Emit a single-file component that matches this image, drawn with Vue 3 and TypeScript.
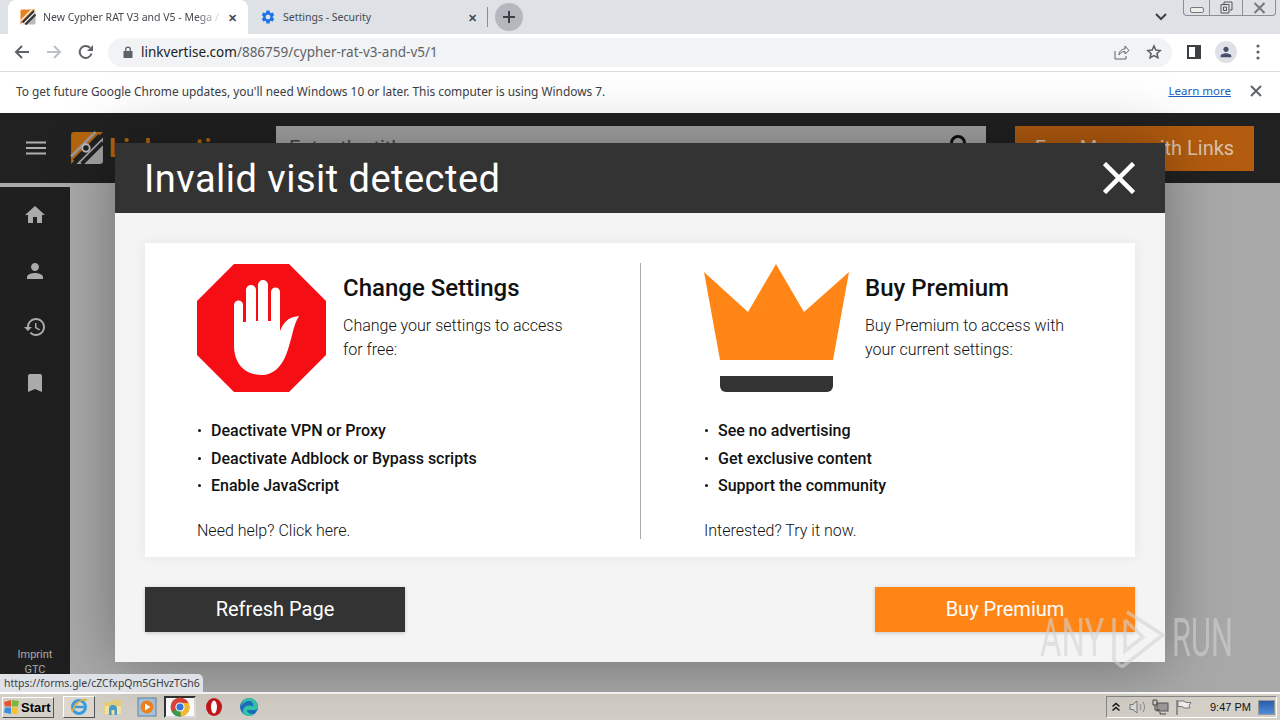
<script setup lang="ts">
const leftItems = ['Deactivate VPN or Proxy', 'Deactivate Adblock or Bypass scripts', 'Enable JavaScript']
const rightItems = ['See no advertising', 'Get exclusive content', 'Support the community']

const navIcons = [
  'M10 20v-6h4v6h5v-8h3L12 3 2 12h3v8z',
  'M12 12c2.21 0 4-1.79 4-4s-1.79-4-4-4-4 1.79-4 4 1.79 4 4 4zm0 2c-2.67 0-8 1.34-8 4v2h16v-2c0-2.66-5.33-4-8-4z',
  'M13 3c-4.97 0-9 4.03-9 9H1l3.89 3.89.07.14L9 12H6c0-3.87 3.13-7 7-7s7 3.13 7 7-3.13 7-7 7c-1.93 0-3.68-.79-4.94-2.06l-1.42 1.42C8.27 19.99 10.51 21 13 21c4.97 0 9-4.03 9-9s-4.03-9-9-9zm-1 5v5l4.28 2.54.72-1.21-3.5-2.08V8H12z',
  'M17 3H7c-1.1 0-2 .9-2 2v16l7-3 7 3V5c0-1.1-.9-2-2-2z',
]

const gear =
  'M19.14 12.94c.04-.3.06-.61.06-.94 0-.32-.02-.64-.07-.94l2.03-1.58a.49.49 0 0 0 .12-.61l-1.92-3.32a.488.488 0 0 0-.59-.22l-2.39.96c-.5-.38-1.03-.7-1.62-.94l-.36-2.54a.484.484 0 0 0-.48-.41h-3.84c-.24 0-.43.17-.47.41l-.36 2.54c-.59.24-1.13.57-1.62.94l-2.39-.96c-.22-.08-.47 0-.59.22L2.74 8.87c-.12.21-.08.47.12.61l2.03 1.58c-.05.3-.09.63-.09.94s.02.64.07.94l-2.03 1.58a.49.49 0 0 0-.12.61l1.92 3.32c.12.22.37.29.59.22l2.39-.96c.5.38 1.03.7 1.62.94l.36 2.54c.05.24.24.41.48.41h3.84c.24 0 .44-.17.47-.41l.36-2.54c.59-.24 1.13-.56 1.62-.94l2.39.96c.22.08.47 0 .59-.22l1.92-3.32c.12-.22.07-.47-.12-.61l-2.01-1.58zM12 15.6c-1.98 0-3.6-1.62-3.6-3.6s1.62-3.6 3.6-3.6 3.6 1.62 3.6 3.6-1.62 3.6-3.6 3.6z'
</script>

<template>
  <div class="screen">
    <div class="tabstrip">
      <div class="tab active">
        <svg class="favicon" viewBox="0 0 32 32">
          <path d="M4 1H31L1 31V4a3 3 0 0 1 3-3z" fill="#e8821e" />
          <path d="M31 6V28a3 3 0 0 1-3 3H6z" fill="#b9b9b9" />
          <path d="M1 24L24 1" stroke="#eee" stroke-width="3" />
          <path d="M5 27L28 4M11 31L31 11" stroke="#333" stroke-width="4" />
        </svg>
        <span class="tab-title fade">New Cypher RAT V3 and V5 - Mega / Linkvertise</span>
        <span class="tab-close">✕</span>
      </div>
      <div class="tab">
        <svg class="favicon" viewBox="0 0 24 24"><path :d="gear" fill="#1a73e8" /></svg>
        <span class="tab-title">Settings - Security</span>
        <span class="tab-close">✕</span>
      </div>
      <span class="tab-sep"></span>
      <span class="new-tab">
        <svg width="14" height="14" viewBox="0 0 14 14"><path d="M7 1v12M1 7h12" stroke="#3c4043" stroke-width="2" /></svg>
      </span>
      <svg class="chevron" width="12" height="8" viewBox="0 0 12 8"><path d="M1 1l5 5 5-5" fill="none" stroke="#3c4043" stroke-width="2" /></svg>
      <div class="winctl">
        <span class="wbtn"><i class="min"></i></span>
        <span class="wbtn">
          <svg width="13" height="13" viewBox="0 0 13 13"><path d="M4 3V1h8v8h-2M1 3.500h8v8.500H1zM3.500 6h3v3.500h-3z" fill="none" stroke="#555" /></svg>
        </span>
        <span class="wbtn">
          <svg width="13" height="12" viewBox="0 0 13 12"><path d="M1.500 1l10 10M11.500 1l-10 10" stroke="#777" stroke-width="2" /></svg>
        </span>
      </div>
    </div>

    <div class="toolbar">
      <svg class="nav" width="16" height="16" viewBox="0 0 16 16"><path d="M15 8H2M8 2L2 8l6 6" fill="none" stroke="#5f6368" stroke-width="2" /></svg>
      <svg class="nav" width="16" height="16" viewBox="0 0 16 16"><path d="M1 8h13M8 2l6 6-6 6" fill="none" stroke="#bdc1c6" stroke-width="2" /></svg>
      <svg class="nav" width="16" height="16" viewBox="0 0 16 16"><path d="M13.500 9.500A6 6 0 1 1 12 3.800" fill="none" stroke="#5f6368" stroke-width="2" /><path d="M15 1v6H9z" fill="#5f6368" /></svg>
      <div class="omnibox">
        <svg class="lock" width="10" height="12" viewBox="0 0 10 12"><path d="M2 5V3.500a3 3 0 0 1 6 0V5h1.500v7H.5V5zM3.300 5h3.400V3.500a1.700 1.700 0 0 0-3.400 0z" fill="#5f6368" /></svg>
        <span class="url"><b>linkvertise.com</b>/886759/cypher-rat-v3-and-v5/1</span>
        <svg class="omni-share" width="16" height="15" viewBox="0 0 16 15"><path d="M1 6v8h11v-3M5 10c0-4 3-6 6-6V1l4 4.500L11 9V6.500C8 6.500 6 8 5 10z" fill="none" stroke="#5f6368" /></svg>
        <svg class="omni-star" width="16" height="16" viewBox="0 0 24 24"><path d="M12 3l2.800 6 6.500.8-4.800 4.400 1.300 6.500L12 17.400l-5.800 3.300 1.300-6.500L2.700 9.800 9.200 9z" fill="none" stroke="#5f6368" stroke-width="2.400" /></svg>
      </div>
      <svg class="side-panel" width="14" height="14" viewBox="0 0 14 14"><rect width="14" height="14" fill="#3c4043" /><rect x="2" y="2" width="6" height="10" fill="#fff" /></svg>
      <span class="avatar">
        <svg width="16" height="16" viewBox="0 0 24 24"><path :d="navIcons[1]" fill="#474f6b" /></svg>
      </span>
      <svg class="kebab" width="4" height="16" viewBox="0 0 4 16"><circle cx="2" cy="2" r="1.600" /><circle cx="2" cy="8" r="1.600" /><circle cx="2" cy="14" r="1.600" /></svg>
    </div>

    <div class="infobar">
      <span class="info-text">To get future Google Chrome updates, you'll need Windows 10 or later. This computer is using Windows 7.</span>
      <a class="learn">Learn more</a>
      <svg class="info-close" width="12" height="12" viewBox="0 0 12 12"><path d="M1 1l10 10M11 1L1 11" stroke="#5f6368" stroke-width="2" /></svg>
    </div>

    <div class="page">
      <header class="site-head">
        <svg class="burger" width="20" height="14" viewBox="0 0 20 14"><path d="M0 1.500h20M0 7h20M0 12.500h20" stroke="#b0b0b0" stroke-width="2" /></svg>
        <svg class="logo" viewBox="0 0 32 32">
          <path d="M4 1H31L1 31V4a3 3 0 0 1 3-3z" fill="#b5650f" />
          <path d="M31 6V28a3 3 0 0 1-3 3H6z" fill="#a3a3a3" />
          <path d="M1 24L24 1" stroke="#999" stroke-width="2.500" />
          <path d="M4 28L28 4M11 31L31 11" stroke="#222" stroke-width="3.500" />
          <circle cx="15" cy="16" r="3.500" fill="#222" stroke="#bbb" stroke-width="1.800" />
        </svg>
        <span class="brand">Linkvertise</span>
        <div class="search">
          <span>Enter the title</span>
          <svg class="search-glass" width="18" height="18" viewBox="0 0 18 18"><circle cx="9" cy="9" r="6.500" fill="none" stroke="#111" stroke-width="3" /></svg>
        </div>
        <div class="earn">Earn Money with Links</div>
      </header>

      <div class="page-body">
        <aside class="sidebar">
          <div class="side-nav">
            <svg v-for="d in navIcons" :key="d" width="24" height="24" viewBox="0 0 24 24"><path :d="d" fill="#aaa" /></svg>
          </div>
          <div class="side-foot">
            <span>Imprint</span>
            <span>GTC</span>
          </div>
        </aside>
      </div>

      <div class="modal">
        <div class="modal-head">
          <h1>Invalid visit detected</h1>
          <svg width="32" height="32" viewBox="0 0 32 32"><path d="M1.500 1.500l29 29M30.500 1.500l-29 29" stroke="#fff" stroke-width="4.500" /></svg>
        </div>
        <div class="modal-body">
          <div class="card">
            <section class="col col-left">
              <div class="col-top">
                <svg class="hero" width="129" height="128" viewBox="197 264 129 128">
                  <path d="M234 264H289L326 301V355L289 392H234L197 355V301Z" fill="#f50f14" />
                  <path d="M234 305a4.500 4.500 0 0 1 9 0V322h3V290a5 5 0 0 1 10 0V321h2V285a5 5 0 0 1 10 0V321h3V292a4.500 4.500 0 0 1 9 0V331C283 324 287 317 299 316C293 325 292 340 286 355C281 368 272 375 262 375C246 375 234 365 234 345Z" fill="#fff" />
                </svg>
                <div class="intro">
                  <h2>Change Settings</h2>
                  <p>Change your settings to access<br />for free:</p>
                </div>
              </div>
              <ul>
                <li v-for="item in leftItems" :key="item">{{ item }}</li>
              </ul>
              <p class="foot">Need help? Click here.</p>
            </section>
            <section class="col col-right">
              <div class="col-top">
                <svg class="hero crown" width="145" height="128" viewBox="704 264 145 128">
                  <path d="M704 272L748 312L776 264L804 312L849 272L833 360H720Z" fill="#ff8616" />
                  <path d="M720 376H833V386a6 6 0 0 1-6 6H726a6 6 0 0 1-6-6Z" fill="#333" />
                </svg>
                <div class="intro">
                  <h2>Buy Premium</h2>
                  <p>Buy Premium to access with<br />your current settings:</p>
                </div>
              </div>
              <ul>
                <li v-for="item in rightItems" :key="item">{{ item }}</li>
              </ul>
              <p class="foot">Interested? Try it now.</p>
            </section>
          </div>
          <div class="actions">
            <button class="btn btn-dark">Refresh Page</button>
            <button class="btn btn-orange">Buy Premium</button>
          </div>
        </div>
      </div>

      <div class="status-bubble">https://forms.gle/cZCfxpQm5GHvzTGh6</div>
    </div>

    <footer class="taskbar">
      <div class="start">
        <svg width="18" height="16" viewBox="0 0 18 16">
          <path d="M1 3l7-2v6.500H2z" fill="#e8532b" />
          <path d="M9 1l7 1-1 5.500H9z" fill="#7cb83c" />
          <path d="M2 8.500h6V15l-7-1.500z" fill="#3a8fe0" />
          <path d="M9 8.500h6L14 15l-5-.5z" fill="#f6c02c" />
        </svg>
        <span>Start</span>
      </div>
      <span class="task ie">
        <svg width="20" height="20" viewBox="0 0 20 20">
          <circle cx="10" cy="10" r="6.500" fill="none" stroke="#3a9be0" stroke-width="3" />
          <path d="M4 10h12" stroke="#3a9be0" stroke-width="2.500" />
          <path d="M3 15C6 6 13 1 18 3" fill="none" stroke="#e8b030" stroke-width="1.500" />
        </svg>
      </span>
      <span class="task plain folder">
        <svg width="20" height="20" viewBox="0 0 20 20">
          <path d="M1 5h7l2-2h8v14H1z" fill="#e6cf7e" />
          <path d="M2 9h16v8H2z" fill="#f2e3a6" />
          <path d="M6 18v-6a4 4 0 0 1 8 0v6h-2.500v-5h-3v5z" fill="#4a9cc8" />
        </svg>
      </span>
      <span class="task plain media">
        <svg width="20" height="20" viewBox="0 0 20 20">
          <rect x="1" y="1" width="18" height="18" fill="#a9c4dc" stroke="#5f86a8" />
          <circle cx="10" cy="10" r="6.500" fill="#ee8420" />
          <path d="M8 6.500l5.500 3.500L8 13.500z" fill="#fff" />
        </svg>
      </span>
      <span class="task pressed">
        <svg width="20" height="20" viewBox="0 0 20 20">
          <circle cx="10" cy="10" r="9.500" fill="#e0463a" />
          <path d="M10 10L1.800 14.700A9.500 9.500 0 0 0 11 19.500z" fill="#35a04e" />
          <path d="M10 10l1 9.500A9.500 9.500 0 0 0 18.600 6H10z" fill="#f6c02c" />
          <circle cx="10" cy="10" r="4.600" fill="#fff" />
          <circle cx="10" cy="10" r="3.500" fill="#3a78e0" />
        </svg>
      </span>
      <span class="task plain opera">
        <svg width="18" height="20" viewBox="0 0 18 20">
          <ellipse cx="9" cy="10" rx="8" ry="9" fill="#c4161c" />
          <ellipse cx="9" cy="10" rx="3" ry="6.500" fill="#fff" />
        </svg>
      </span>
      <span class="task plain edge">
        <svg width="20" height="20" viewBox="0 0 20 20">
          <circle cx="10" cy="10" r="9" fill="#1b6fc0" />
          <path d="M10 1a9 9 0 0 1 9 9c0 2-2 3-4 3H8c0 3 4 5 8 3.500A9 9 0 0 1 5 17.500C2 13 6 8 11 8.500c2 .2 3 1 3 1.500 1-3-1-6-4-6-3 0-6 2-8 5C3 4 6 1 10 1z" fill="#37c6a8" />
        </svg>
      </span>
      <div class="tray">
        <svg width="10" height="10" viewBox="0 0 10 10"><path d="M1.500 4.500L5 1.500l3.500 3M1.500 8.500L5 5.500l3.500 3" fill="none" stroke="#111" stroke-width="1.500" /></svg>
        <svg width="17" height="16" viewBox="0 0 17 16"><path d="M1 5.500h3L8 2v12L4 10.500H1z" fill="#ddd" stroke="#777" /><path d="M11 5c1 2 1 4 0 6M14 3c2 3 2 7 0 10" fill="none" stroke="#888" /></svg>
        <svg width="17" height="16" viewBox="0 0 17 16"><rect x="5" y="4" width="11" height="8" fill="#999" stroke="#555" /><path d="M1 1h4v5H1zM3 6v5h5M8 13v2h6" fill="none" stroke="#444" /></svg>
        <svg width="17" height="16" viewBox="0 0 17 16"><path d="M2 1v15" stroke="#666" stroke-width="1.200" /><path d="M3 2h6l2 1.500h5l-2 3 1 2.500h-6L7 7.500H3z" fill="#eee" stroke="#777" /></svg>
        <span class="clock">9:47 PM</span>
        <span class="show-desk"></span>
      </div>
    </footer>

    <div class="watermark">
      <span class="wm-any">ANY</span>
      <svg width="60" height="64" viewBox="1108 606 60 64">
        <path d="M1127 612L1163 635L1122 667" fill="none" stroke="currentColor" stroke-width="3.500" />
        <path d="M1114 618V660L1122 667M1125 620V651L1143 637L1125 620" fill="none" stroke="currentColor" stroke-width="3.500" />
      </svg>
      <span class="wm-run">RUN</span>
    </div>
  </div>
</template>

<style>
html, body { margin: 0; padding: 0; background: #fff; }
</style>

<style scoped>
.screen {
  position: relative;
  width: 1280px;
  height: 720px;
  overflow: hidden;
  display: flex;
  flex-direction: column;
  font-family: "Noto Sans", "Liberation Sans", sans-serif;
  font-size: 11px;
  color: #222;
}

.tabstrip {
  height: 34px;
  flex: none;
  display: flex;
  align-items: center;
  background: #dee1e6;
  position: relative;
  padding-left: 8px;
  box-sizing: border-box;
}
.tab {
  width: 240px;
  height: 34px;
  box-sizing: border-box;
  display: flex;
  align-items: center;
  padding: 0 11px 0 12px;
  color: #45494f;
}
.tab.active {
  background: #fff;
  border-radius: 8px 8px 0 0;
}
.favicon { width: 16px; height: 16px; flex: none; margin-right: 7px; }
.tab-title { flex: 1; overflow: hidden; white-space: nowrap; font-size: 10.500px; }
.tab-title.fade {
  margin-right: 5px;
  -webkit-mask-image: linear-gradient(to right, #000 85%, transparent 100%);
  mask-image: linear-gradient(to right, #000 85%, transparent 100%);
}
.tab-close { font-size: 11px; color: #45494f; font-weight: 700; }
.tab-sep { width: 1px; height: 20px; background: #8a8d91; margin-left: -1px; }
.new-tab {
  width: 28px;
  height: 28px;
  border-radius: 50%;
  background: #b4b7bd;
  display: flex;
  align-items: center;
  justify-content: center;
  margin-left: 7px;
}
.chevron { margin-left: 632px; }
.winctl {
  position: absolute;
  top: 0;
  right: 4px;
  width: 93px;
  height: 16px;
  display: flex;
  border: 1px solid #8b8e93;
  border-top: none;
  border-radius: 0 0 4px 4px;
  box-sizing: border-box;
}
.wbtn {
  flex: 1;
  display: flex;
  align-items: center;
  justify-content: center;
  border-left: 1px solid #8b8e93;
  overflow: hidden;
}
.wbtn:first-child { border-left: none; flex: none; width: 25px; }
.min { width: 12px; height: 4px; border: 1px solid #777; border-radius: 2px; background: #eee; margin-top: 4px; }

.toolbar {
  height: 38px;
  flex: none;
  box-sizing: border-box;
  background: #fff;
  border-bottom: 1px solid #dcdcdc;
  display: flex;
  align-items: center;
  padding: 0 0 1px 14px;
}
.nav { margin-right: 16px; }
.omnibox {
  width: 1064px;
  height: 29px;
  margin-left: -2px;
  border-radius: 15px;
  background: #f1f3f4;
  display: flex;
  align-items: center;
  padding-left: 15px;
  box-sizing: border-box;
}
.lock { margin-right: 8px; }
.url { flex: 1; font-size: 13.500px; color: #5f6368; white-space: nowrap; }
.url b { font-weight: 400; color: #202124; }
.omni-share { margin-right: 16px; }
.omni-star { margin-right: 10px; }
.side-panel { margin-left: 15px; }
.avatar {
  width: 22px;
  height: 22px;
  border-radius: 50%;
  background: #dfe1e7;
  display: flex;
  align-items: center;
  justify-content: center;
  margin-left: 14px;
}
.kebab { margin-left: 19px; fill: #5f6368; }

.infobar {
  height: 41px;
  flex: none;
  box-sizing: border-box;
  background: #fff;
  display: flex;
  align-items: center;
  padding: 0 18px 4px 16px;
  font-size: 11.880px;
  color: #3c4043;
}
.info-text { flex: 1; white-space: nowrap; }
.learn { color: #1a5fc0; text-decoration: underline; margin-right: 19px; font-size: 11.500px; }

.page {
  position: relative;
  flex: 1;
  min-height: 0;
  background: #a9a9a9;
  display: flex;
  flex-direction: column;
}
.site-head {
  height: 70px;
  flex: none;
  background: #212121;
  display: flex;
  align-items: center;
  padding-left: 26px;
  font-family: Roboto, sans-serif;
}
.burger { margin-right: 24px; }
.logo { width: 34px; height: 34px; flex: none; }
.brand { width: 167px; margin-left: 5px; color: #b5650f; font-size: 26px; font-weight: 700; }
.search {
  width: 710px;
  height: 45px;
  box-sizing: border-box;
  background: #a6a6a6;
  display: flex;
  align-items: center;
  justify-content: space-between;
  padding: 0 19px 0 13px;
  font-size: 20px;
  color: #444;
  margin-top: 0;
}
.search-glass { margin-top: -10px; }
.earn {
  width: 239px;
  height: 45px;
  margin-left: 29px;
  background: #b35c0f;
  color: #d8c3ad;
  font-size: 20px;
  display: flex;
  align-items: center;
  justify-content: center;
}
.page-body { flex: 1; min-height: 0; display: flex; padding-top: 4px; }
.sidebar {
  width: 70px;
  background: #1f1f1f;
  display: flex;
  flex-direction: column;
  justify-content: space-between;
  font-family: Roboto, sans-serif;
}
.side-nav {
  display: flex;
  flex-direction: column;
  align-items: center;
  gap: 32px;
  padding-top: 16px;
}
.side-foot {
  display: flex;
  flex-direction: column;
  align-items: center;
  line-height: 15px;
  font-size: 11px;
  color: #aaa;
  padding-bottom: 15px;
}

.modal {
  position: absolute;
  left: 115px;
  top: 30px;
  width: 1050px;
  height: 519px;
  background: #f4f4f4;
  box-shadow: 0 0 60px rgba(0, 0, 0, 0.35);
  display: flex;
  flex-direction: column;
  font-family: Roboto, sans-serif;
  color: #111;
}
.modal-head {
  height: 70px;
  flex: none;
  background: #333;
  color: #fff;
  display: flex;
  align-items: center;
  justify-content: space-between;
  padding: 0 30px;
}
.modal-head h1 { margin: 2px 0 0 -1px; font-size: 38px; font-weight: 400; letter-spacing: 0.480px; }
.modal-body {
  flex: 1;
  display: flex;
  flex-direction: column;
  padding: 30px;
  gap: 30px;
}
.card {
  height: 314px;
  flex: none;
  background: #fff;
  box-shadow: 0 0 12px rgba(0, 0, 0, 0.06);
  display: grid;
  grid-template-columns: 496px 494px;
  box-sizing: border-box;
  padding-top: 20px;
}
.col { display: flex; flex-direction: column; height: 276px; position: relative; }
.col-left { padding-left: 52px; border-right: 1px solid #aaa; }
.col-right { padding-left: 63px; }
.col-top { display: flex; height: 128px; flex: none; padding-top: 1px; }
.col-left .hero { margin-right: 17px; }
.col-right .hero { margin-right: 16px; }
.intro { padding-top: 9px; }
.intro h2 { margin: 0; font-size: 24px; font-weight: 500; line-height: 30px; }
.intro p { margin: 11px 0 0; font-size: 16px; font-weight: 300; line-height: 24px; }
ul { list-style: none; margin: 25px 0 0; padding: 0; }
li {
  position: relative;
  padding-left: 14px;
  font-size: 16px;
  font-weight: 500;
  line-height: 27.500px;
}
li::before {
  content: "";
  position: absolute;
  left: 1px;
  top: 12px;
  width: 3px;
  height: 3px;
  border-radius: 50%;
  background: #111;
}
.foot { margin: 19px 0 0; font-size: 16px; font-weight: 300; line-height: 24px; }
.actions { display: flex; justify-content: space-between; }
.btn {
  width: 260px;
  height: 45px;
  border: none;
  color: #fff;
  font-family: Roboto, sans-serif;
  font-size: 20px;
  padding: 0 0 2px;
  box-shadow: 0 1px 4px rgba(0, 0, 0, 0.2);
}
.btn-dark { background: #333; }
.btn-orange { background: #ff8616; }

.status-bubble {
  position: absolute;
  left: 0;
  bottom: 0;
  height: 18px;
  width: 203px;
  box-sizing: border-box;
  background: #dee1e6;
  border-radius: 0 5px 0 0;
  padding-left: 4px;
  font-size: 10.500px;
  line-height: 18px;
  color: #3c4043;
  white-space: nowrap;
}

.taskbar {
  height: 28px;
  flex: none;
  box-sizing: border-box;
  background: #d4d0c8;
  border-top: 2px solid #fff;
  display: flex;
  align-items: center;
  padding-left: 2px;
  font-family: "Liberation Sans", sans-serif;
}
.start {
  width: 52px;
  height: 21px;
  box-sizing: border-box;
  display: flex;
  align-items: center;
  padding-left: 0;
  font-size: 13px;
  font-weight: 700;
  color: #000;
  background: #d4d0c8;
  border: 1px solid #fff;
  border-right-color: #555;
  border-bottom-color: #555;
}
.task {
  width: 32px;
  height: 22px;
  box-sizing: border-box;
  display: flex;
  align-items: center;
  justify-content: center;
  border: 1px solid #fff;
  border-right-color: #555;
  border-bottom-color: #555;
}
.task.ie { margin-left: 9px; background: #dcd8d0; }
.task.plain { border: none; width: 24px; }
.task.folder { margin-left: 6px; }
.task.media { margin-left: 10px; }
.task.pressed {
  margin-left: 5px;
  background: #fff;
  border: 2px solid #333;
  border-right-color: #ddd;
  border-bottom-color: #ddd;
}
.task.opera { margin-left: 6px; }
.task.edge { margin-left: 11px; }
.tray {
  margin-left: auto;
  margin-right: 3px;
  width: 171px;
  height: 22px;
  box-sizing: border-box;
  border: 1px solid #888;
  border-right-color: #fff;
  border-bottom-color: #fff;
  display: flex;
  align-items: center;
  gap: 6px;
  padding-left: 4px;
}
.tray svg:nth-child(2) { margin-left: 2px; }
.clock { margin-left: 12px; font-size: 11px; color: #111; white-space: nowrap; }
.show-desk {
  width: 15px;
  height: 13px;
  margin-left: auto;
  margin-right: 1px;
  background: linear-gradient(#2a5ca8, #4f8fd8);
  border: 1px solid #999;
}

.watermark {
  position: absolute;
  left: 1040px;
  top: 606px;
  display: flex;
  align-items: center;
  color: rgba(210, 210, 210, 0.6);
  font-family: Roboto, sans-serif;
  font-weight: 400;
  font-size: 53px;
  line-height: 64px;
  pointer-events: none;
}
.watermark svg { flex: none; margin: 0 4px 0 5px; }
.watermark span {
  display: inline-block;
  width: 63px;
  white-space: nowrap;
  transform-origin: left center;
}
.wm-any { transform: scaleX(0.62); }
.wm-run { transform: scaleX(0.58); }
</style>
